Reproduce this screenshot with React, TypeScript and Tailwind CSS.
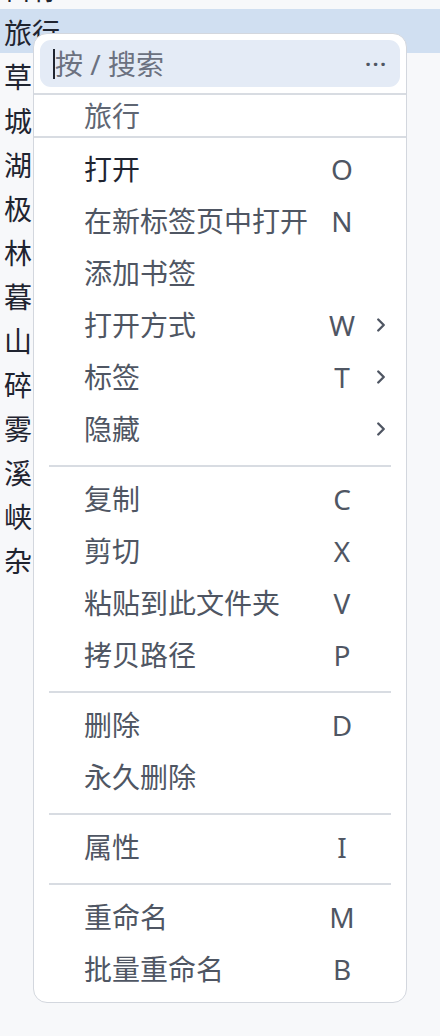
import { ChevronRight } from "lucide-react";

type Item = { label: string; key?: string; sub?: boolean; strong?: boolean };

const folders = ["目标", "旅行", "草", "城", "湖", "极", "林", "暮", "山", "碎", "雾", "溪", "峡", "杂"];

const groups: Item[][] = [
  [
    { label: "打开", key: "O", strong: true },
    { label: "在新标签页中打开", key: "N" },
    { label: "添加书签" },
    { label: "打开方式", key: "W", sub: true },
    { label: "标签", key: "T", sub: true },
    { label: "隐藏", sub: true },
  ],
  [
    { label: "复制", key: "C" },
    { label: "剪切", key: "X" },
    { label: "粘贴到此文件夹", key: "V" },
    { label: "拷贝路径", key: "P" },
  ],
  [
    { label: "删除", key: "D" },
    { label: "永久删除" },
  ],
  [{ label: "属性", key: "I" }],
  [
    { label: "重命名", key: "M" },
    { label: "批量重命名", key: "B" },
  ],
];

function MenuRow({ item }: { item: Item }) {
  return (
    <div className="flex h-[52px] items-center pl-[50px] pr-[14px]">
      <span className={`flex-1 ${item.strong ? "text-[#1f2430]" : "text-[#4f5663]"}`}>{item.label}</span>
      <span className="w-[30px] text-center text-[#4f5663]">{item.key ?? ""}</span>
      <span className="ml-[13px] flex w-[22px] justify-center text-[#4f5663]">
        {item.sub && <ChevronRight size={22} strokeWidth={2.6} />}
      </span>
    </div>
  );
}

export default function App() {
  return (
    <div
      className="relative h-[1036px] w-[440px] overflow-hidden bg-[#f7f8fa] text-[28px] leading-none"
      style={{ fontFamily: '"Noto Sans", "Noto Sans CJK SC", sans-serif' }}
    >
      <div className="-mt-[35px] flex flex-col">
        {folders.map((f, i) => (
          <div
            key={f}
            className={`flex h-[44px] items-center pl-[4px] pt-[4px] text-[#1f2430] ${i === 1 ? "bg-[#d0dff1]" : ""}`}
          >
            {f}
          </div>
        ))}
      </div>

      <div className="absolute left-[33px] top-[33px] w-[374px] rounded-[14px] border border-[#d3d7de] bg-white pb-[7px]">
        <div className="p-[6px]">
          <div className="flex h-[47px] items-center rounded-[11px] bg-[#e4ebf6] pl-[13px] pr-[12px] text-[#6b7180]">
            <span className="h-[30px] w-[2px] bg-[#1f2430]" />
            <span className="flex-1">按 / 搜索</span>
            <span className="text-[20px] font-bold tracking-[2px] text-[#4f5663]">···</span>
          </div>
        </div>
        <div className="h-[2px] bg-[#d8dce2]" />
        <div className="flex h-[41px] items-center pl-[50px] text-[#5f6673]">旅行</div>
        <div className="h-[2px] bg-[#d8dce2]" />
        <div className="pt-[5px]">
          {groups.map((g, gi) => (
            <div key={gi}>
              {gi > 0 && <div className="mx-[15px] mb-[6px] mt-[10px] h-[2px] bg-[#d8dce2]" />}
              {g.map((it) => (
                <MenuRow key={it.label} item={it} />
              ))}
            </div>
          ))}
        </div>
      </div>
    </div>
  );
}
